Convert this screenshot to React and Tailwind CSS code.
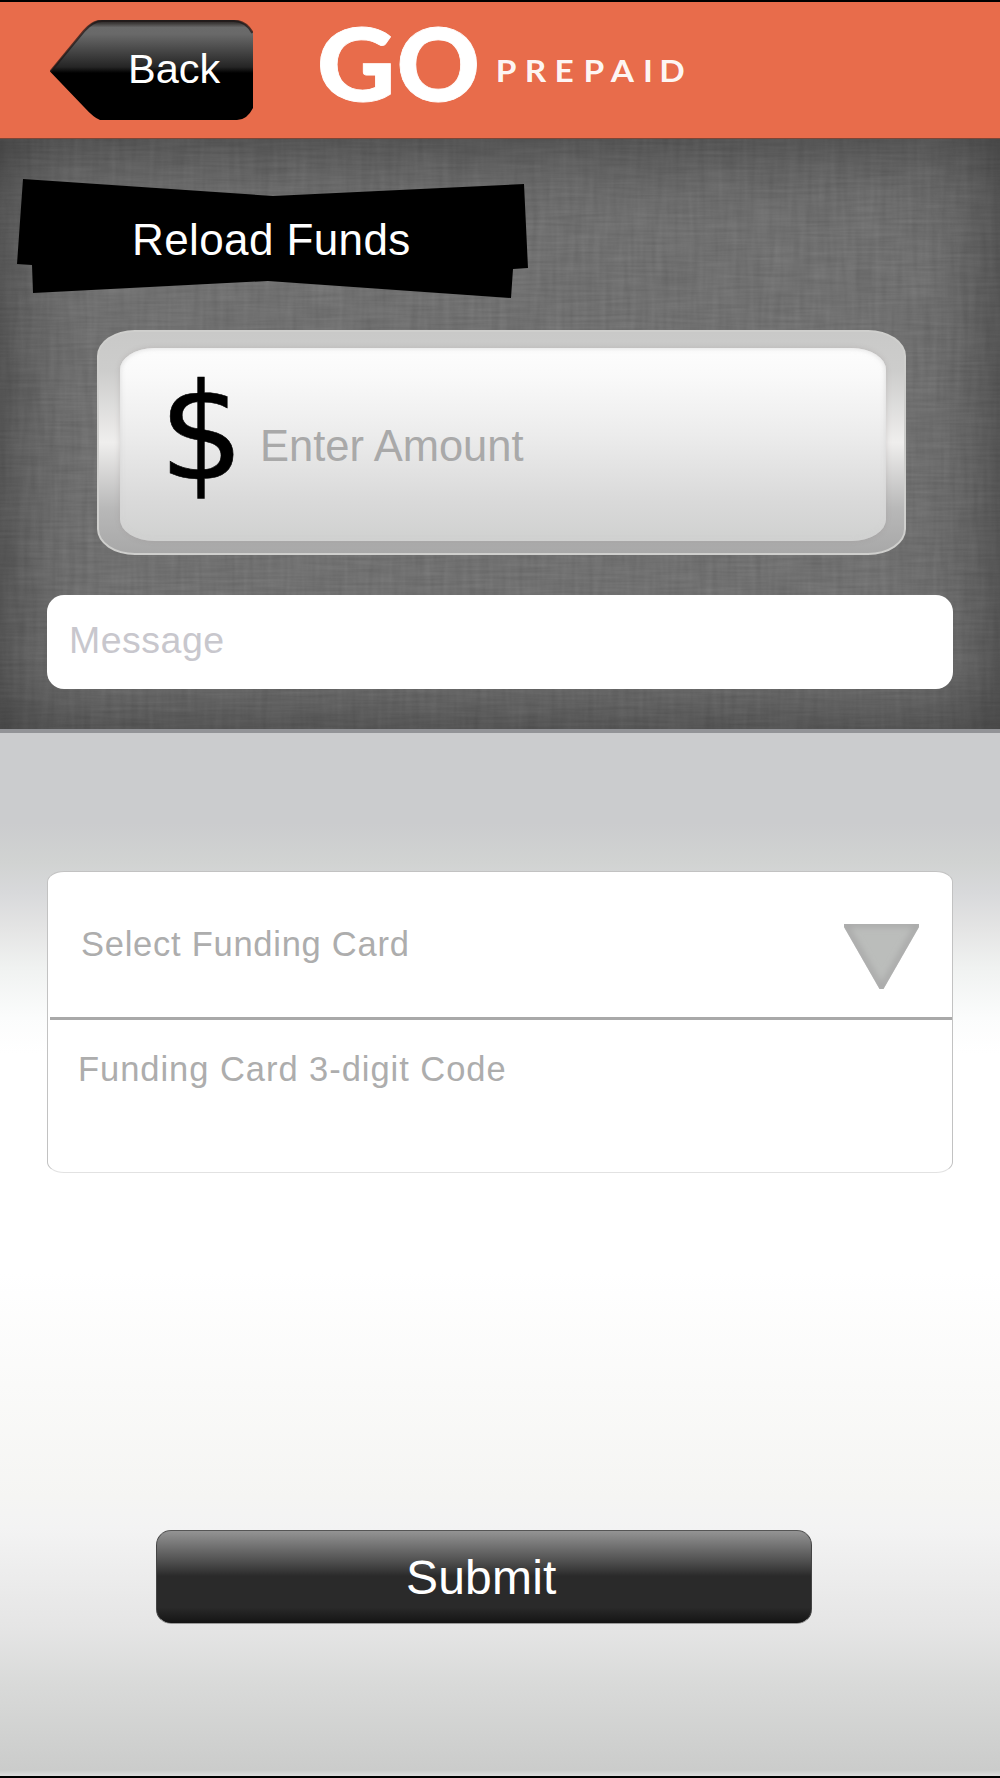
import React from "react";

function BackButton() {
  return (
    <button className="relative flex h-[100px] w-[203px] shrink-0 items-start text-left">
      <svg className="absolute inset-0" width="203" height="100" viewBox="0 0 203 100" aria-hidden="true">
        <defs>
          <linearGradient id="backFill" x1="0" y1="0" x2="0" y2="1">
            <stop offset="0" stopColor="#2b2625" />
            <stop offset="0.03" stopColor="#3a3635" />
            <stop offset="0.075" stopColor="#6a6a6a" />
            <stop offset="0.14" stopColor="#696969" />
            <stop offset="0.47" stopColor="#252525" />
            <stop offset="0.53" stopColor="#000" />
          </linearGradient>
        </defs>
        <path
          d="M0 51.500 L34 11 Q43 0 52 0 H184 Q196 1 203 13 V88 Q197 100 187 100 H50 Q44 98 34 87 Z"
          fill="url(#backFill)"
        />
        <path d="M0.500 51.500 L34 11 Q43 0.800 52 0.800 H184 Q196 1 202.500 13" fill="none" stroke="#1c1615" strokeOpacity="0.7" strokeWidth="2.500" />
      </svg>
      <span className="relative block pl-[78px] pt-[24px] text-[41.5px] leading-[50px] text-white">Back</span>
    </button>
  );
}

function Logo() {
  return (
    <svg className="ml-[47px] -mt-[18px]" width="400" height="136" viewBox="300 2 400 136" role="img" aria-label="GO Prepaid">
      <g fill="#fff" stroke="#fff" fontFamily="Lato, sans-serif">
        <g fontSize="101" fontWeight="900" strokeWidth="0.8">
          <text transform="translate(316.800 101) scale(1.075 1)">G</text>
          <text transform="translate(396.500 101) scale(1.020 1)">O</text>
        </g>
        <text
          transform="translate(495.800 82) scale(1.080 1)"
          x="0 26.800 54.400 81.200 106.400 136.400 151.400"
          fontSize="31"
          fontWeight="700"
          strokeWidth="0"
          fillOpacity="0.94"
        >
          PREPAID
        </text>
      </g>
    </svg>
  );
}

function LinenTexture() {
  return (
    <svg className="absolute inset-0 h-full w-full" aria-hidden="true">
      <filter id="weaveX" x="0" y="0" width="100%" height="100%" colorInterpolationFilters="sRGB">
        <feTurbulence type="fractalNoise" baseFrequency="0.02 0.32" numOctaves="2" seed="4" />
        <feColorMatrix values="0.9 0 0 0 0  0.9 0 0 0 0  0.9 0 0 0 0  0 0 0 0 1" />
      </filter>
      <filter id="weaveY" x="0" y="0" width="100%" height="100%" colorInterpolationFilters="sRGB">
        <feTurbulence type="fractalNoise" baseFrequency="0.16 0.018" numOctaves="2" seed="9" />
        <feColorMatrix values="0.9 0 0 0 0  0.9 0 0 0 0  0.9 0 0 0 0  0 0 0 0 1" />
      </filter>
      <rect width="100%" height="100%" filter="url(#weaveX)" opacity="0.075" />
      <rect width="100%" height="100%" filter="url(#weaveY)" opacity="0.06" />
    </svg>
  );
}

function TitleBanner() {
  return (
    <div className="relative ml-[17px] h-[119px] w-[511px]">
      <svg className="absolute inset-0" width="511" height="119" viewBox="0 0 511 119" aria-hidden="true">
        <path d="M6 0 L256 17 L507 5 L511 89 L496 90 L494 119 L251 102 L16 114 L15 86 L0 85 Z" fill="#000" />
      </svg>
      <h1 className="relative pl-[115px] pt-[36px] text-[44px] leading-[50px] tracking-[0.4px] text-white">Reload Funds</h1>
    </div>
  );
}

function AmountField() {
  return (
    <div className="ml-[97px] mt-[32px] h-[225px] w-[809px] rounded-[38px/26px] border-2 border-[#cfcfcd] bg-[linear-gradient(to_bottom,#c9c9c8_0%,#cdcdcc_18%,#efeeed_50%,#b8b8b8_80%,#a8a8a8_100%)] pl-[21px] pr-[18px] pt-[16px]">
      <div className="flex h-[193px] rounded-[34px/22px] bg-[linear-gradient(to_bottom,#fdfdfd_0%,#f9f9f9_15%,#ececec_45%,#d9d9d9_80%,#d0d1d0_100%)] shadow-[0_0_4px_1px_rgba(150,145,145,0.25),inset_0_0_4px_1px_rgba(210,210,210,0.6)]">
        <span className="ml-[39px] mt-[18px] w-[86px] font-['DejaVu_Sans',sans-serif] text-[134px] leading-[134px] text-black [-webkit-text-stroke:0.6px_black]">$</span>
        <span className="ml-[15px] mt-[73px] text-[43.5px] leading-[50px] text-[#a9a9a9]">Enter Amount</span>
      </div>
    </div>
  );
}

function FundingCard() {
  return (
    <div className="mx-[47px] mt-[138px] h-[302px] rounded-[17px/11px] border border-t-[#c2c2c2] border-x-[#c2c2c2] border-b-[#e2e2e2] bg-white">
      <button className="flex h-[145px] w-full items-start text-left">
        <span className="ml-[33px] mt-[52px] flex-1 text-[34.5px] leading-[40px] tracking-[0.74px] text-[#adadad]">Select Funding Card</span>
        <svg className="mr-[33px] mt-[52px]" width="75" height="66" viewBox="0 0 75 66" aria-hidden="true">
          <defs>
            <clipPath id="arrowClip"><path d="M0 0 H75 V3 L39.500 65 H35.500 L0 3 Z" /></clipPath>
            <filter id="arrowSoft" x="-20%" y="-20%" width="140%" height="140%"><feGaussianBlur stdDeviation="3" /></filter>
          </defs>
          <g clipPath="url(#arrowClip)">
            <rect width="75" height="66" fill="#bbbdbb" />
            <path d="M0 0 H75 L37.500 66 Z" fill="none" stroke="#a8a8a8" strokeWidth="6" filter="url(#arrowSoft)" />
          </g>
        </svg>
      </button>
      <div className="ml-[2px] h-[3px] bg-[#a9a9a9]" />
      <div className="pl-[30px] pt-[29px] text-[34.5px] leading-[40px] tracking-[0.96px] text-[#adadad]">Funding Card 3-digit Code</div>
    </div>
  );
}

export default function App() {
  return (
    <div className="flex h-[1778px] w-[1000px] flex-col overflow-hidden border-y-2 border-black bg-white font-['Liberation_Sans',Arial,sans-serif]">
      <header className="flex h-[137px] shrink-0 items-start border-b border-[#7d4536] bg-[#e86c4b] pl-[50px] pt-[18px]">
        <BackButton />
        <Logo />
      </header>
      <section className="relative h-[590px] shrink-0 overflow-hidden bg-[#717171]">
        <LinenTexture />
        <div className="absolute inset-0 shadow-[inset_0_0_90px_rgba(0,0,0,0.5)]" />
        <div className="relative pt-[40px]">
          <TitleBanner />
          <AmountField />
          <div className="mx-[47px] mt-[40px] h-[94px] rounded-[17px] bg-white pl-[22px] pt-[23px] text-[37.5px] leading-[44px] tracking-[0.5px] text-[#c8c7cd]">
            Message
          </div>
        </div>
      </section>
      <main className="flex-1 border-t-4 border-[#929397] bg-[linear-gradient(to_bottom,#cbccce_0px,#cbccce_90px,#d1d3d2_130px,#d8d9db_160px,#e4e4e4_195px,#f0f2f1_235px,#fbfcfc_285px,#ffffff_320px,#ffffff_540px,#f5f5f3_765px,#f3f3f3_795px,#e5e5e5_895px,#d9dad9_950px,#d1d2d1_1000px,#cbcccb_1037px,#dedede_1043px)]">
        <FundingCard />
        <button className="ml-[156px] mt-[357px] block h-[94px] w-[656px] rounded-[15px] border border-t-[#555] border-x-[#444] border-b-[#999] bg-[linear-gradient(to_bottom,#949494_0%,#777_14%,#4b4b4b_35%,#2a2a2a_49%,#2a2a2a_83%,#141414_100%)] pl-[249px] pt-[2px] text-left text-[48px] leading-[56px] tracking-[0.2px] text-white">
          Submit
        </button>
      </main>
    </div>
  );
}
